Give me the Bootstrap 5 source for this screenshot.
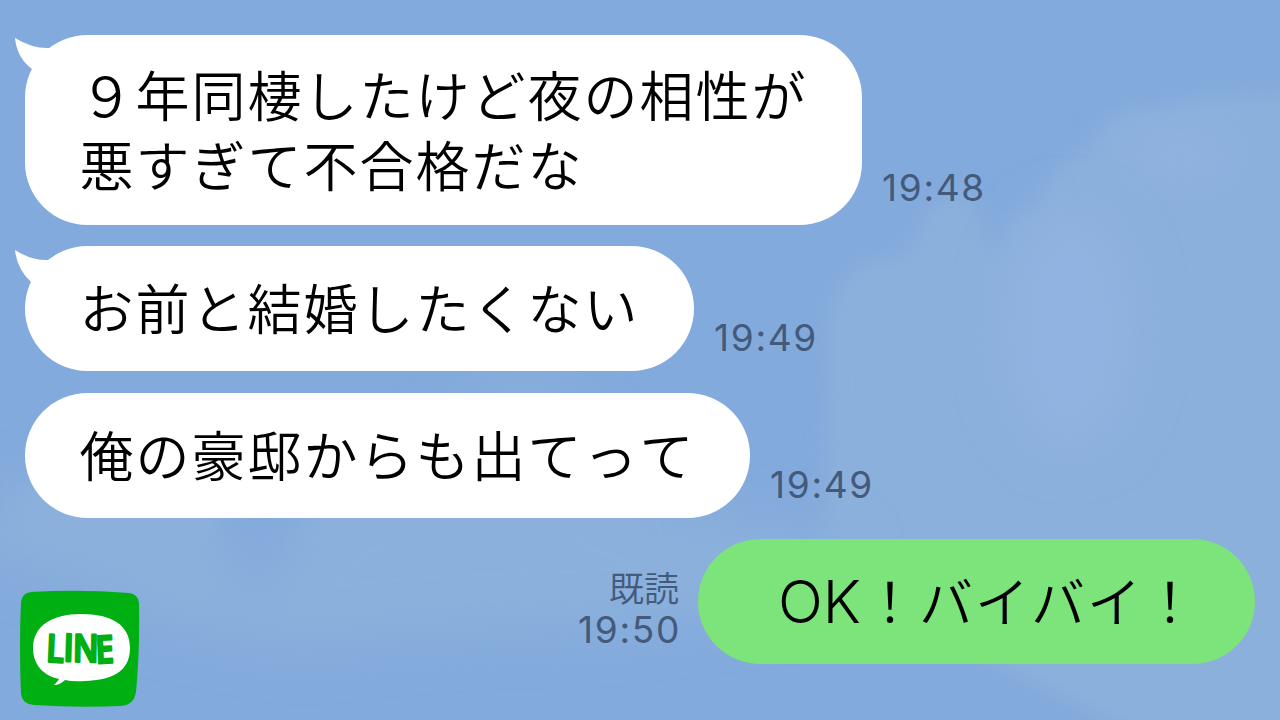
<!DOCTYPE html>
<html lang="ja">
<head>
  <meta charset="UTF-8">
  <title>LINE トーク</title>
  <meta name="viewport" content="width=device-width, initial-scale=1">
  <link href="https://cdn.jsdelivr.net/npm/bootstrap@5.3.2/dist/css/bootstrap.min.css" rel="stylesheet">
  <style>
    body {
      background: #83aadc;
      font-family: "Noto Sans CJK JP", sans-serif;
    }
    .talk {
      width: 1280px;
      height: 720px;
      padding: 35px 25px 0;
      isolation: isolate;
    }
    .sky {
      inset: 0;
      z-index: -1;
    }
    .bubble {
      padding: 26px 54.5px 29px 54.5px;
      border-radius: 62.5px;
      background: #fff;
      color: #000;
      font-size: 54px;
      font-weight: 350;
      font-kerning: none;
      letter-spacing: 2px;
      line-height: 70px;
      white-space: nowrap;
    }
    .bubble-long {
      padding-top: 24px;
      padding-bottom: 26px;
    }
    .bubble-mine {
      width: 557px;
      padding-right: 56px;
      background: #7de37b;
      text-align: right;
    }
    .latin {
      margin-right: 2px;
      font-family: Inter, sans-serif;
      font-size: 59px;
      font-weight: 300;
      letter-spacing: 0;
      line-height: 1;
    }
    .tail {
      left: -11px;
      top: 2px;
    }
    .sent-at {
      color: #435a7b;
      font-family: Inter, sans-serif;
      font-size: 37px;
      line-height: 42px;
      letter-spacing: 1.7px;
      margin: 0 0 12px 20px;
    }
    .bubble-long + .sent-at {
      margin-bottom: 16px;
    }
    .read-info {
      color: #435a7b;
      margin: 25px 19px 0 0;
    }
    .read-label {
      font-size: 35px;
      font-weight: 350;
      line-height: 45px;
    }
    .read-info .sent-at {
      margin: 0 -2px 0 0;
    }
    .app-logo {
      margin: 51px 0 0 -6px;
    }
  </style>
</head>
<body>
  <main class="talk position-relative overflow-hidden d-flex flex-column">
    <!-- Clouds -->
    <svg class="sky position-absolute" width="1280" height="720" viewBox="0 0 1280 720" aria-hidden="true">
      <defs>
        <filter id="soft" x="-20%" y="-20%" width="140%" height="140%"><feGaussianBlur stdDeviation="10"/></filter>
        <filter id="softer" x="-40%" y="-40%" width="180%" height="180%"><feGaussianBlur stdDeviation="25"/></filter>
      </defs>
      <path filter="url(#soft)" fill="#8bb0dc" d="M825 560 L830 310 Q850 255 885 260 Q915 255 922 220 Q945 185 975 200 Q985 255 998 252 Q1008 212 1040 207 Q1045 165 1090 150 Q1105 105 1160 108 Q1200 90 1300 95 V740 H1150 L950 640Z"/>
      <path filter="url(#softer)" fill="#8bb0dc" d="M-20 500 Q20 475 60 490 L210 500 Q245 600 262 600 Q285 520 340 500 L520 380 Q600 400 620 500 L850 540 V600 L600 630 Q430 630 300 650 L150 620 Q80 570 -20 560Z"/>
      <path filter="url(#soft)" fill="#8bb0dc" d="M20 490 H205 Q230 540 180 550 L40 540Z M320 505 H640 V540 H300Z"/>
      <ellipse filter="url(#softer)" cx="1070" cy="330" rx="65" ry="120" fill="#91b3e1"/>
      <ellipse filter="url(#softer)" cx="1180" cy="155" rx="60" ry="25" fill="#91b3e1"/>
    </svg>

    <!-- Received messages -->
    <div class="d-flex align-items-end">
      <div class="bubble bubble-long position-relative">
        <svg class="tail position-absolute" width="40" height="36" viewBox="0 0 40 36" aria-hidden="true"><path fill="#fff" d="M1 1Q19 12 36 11L40 30L22 36L18 32Q3 21 1 1Z"/></svg>
        &#xFF19;年同棲したけど夜の相性が<br>悪すぎて不合格だな
      </div>
      <div class="sent-at">19:48</div>
    </div>
    <div class="d-flex align-items-end" style="margin-top: 21px">
      <div class="bubble position-relative">
        <svg class="tail position-absolute" width="40" height="36" viewBox="0 0 40 36" aria-hidden="true"><path fill="#fff" d="M1 2Q18 13 35 12L40 30L22 36L17 34Q3 21 1 2Z"/></svg>
        お前と結婚したくない
      </div>
      <div class="sent-at">19:49</div>
    </div>
    <div class="d-flex align-items-end" style="margin-top: 22px">
      <div class="bubble">俺の豪邸からも出てって</div>
      <div class="sent-at">19:49</div>
    </div>

    <!-- Logo and own reply -->
    <div class="d-flex align-items-start" style="margin-top: 21px">
      <svg class="app-logo" width="121" height="118" viewBox="0 0 121 118" role="img" aria-label="LINE">
        <path fill="#00af12" d="M12 2Q60 -1 110 3Q119 4 120 13Q121 60 117 102Q115 115 102 116Q58 118 15 115Q3 114 2 104Q0 55 2 12Q3 3 12 2Z"/>
        <path fill="#fff" d="M62 24C93 24 111 35 111 58C111 83 91 90 66 91Q54 92 46 90Q41 95 35 95Q39 91 40 89C25 86 14 75 14 58C14 36 33 24 62 24Z"/>
        <g transform="scale(.86 1)" fill="#00af12" stroke="#00af12" stroke-width="2.6" stroke-linejoin="round" font-family="Open Sans, sans-serif" font-size="38" font-weight="600">
          <text x="31 51.5 62.5 89.5" y="71.5 71 71.5 73.5" rotate="3 2 1 -3">LINE</text>
        </g>
      </svg>
      <div class="read-info ms-auto text-end">
        <div class="read-label">既読</div>
        <div class="sent-at">19:50</div>
      </div>
      <div class="bubble bubble-mine"><span class="latin">OK</span>&#xFF01;バイバイ&#xFF01;</div>
    </div>
  </main>

  <script src="https://cdn.jsdelivr.net/npm/bootstrap@5.3.2/dist/js/bootstrap.bundle.min.js"></script>
</body>
</html>
